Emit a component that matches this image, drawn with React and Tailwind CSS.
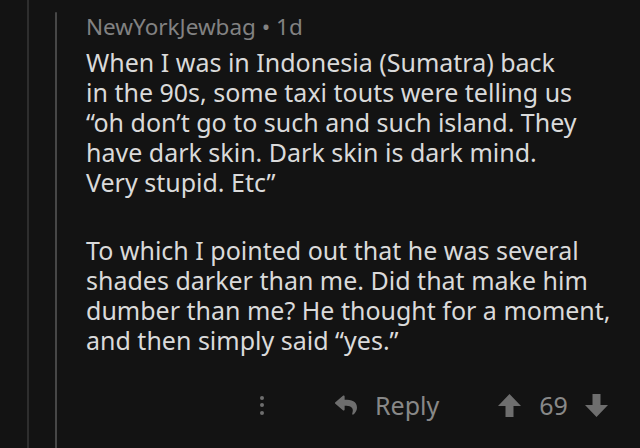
import { FaReply } from "react-icons/fa";

function Arrow({ down }) {
  return (
    <svg width="23" height="23" viewBox="0 0 23 23" className="shrink-0">
      <path
        d={down ? "M11.5 23 L23 11 L15.5 11 L15.5 0 L7.5 0 L7.5 11 L0 11 Z" : "M11.5 0 L23 12 L15.5 12 L15.5 23 L7.5 23 L7.5 12 L0 12 Z"}
        fill="#6e6e6e"
      />
    </svg>
  );
}

export default function App() {
  return (
    <div className="w-[640px] h-[448px] overflow-hidden bg-[#131313] flex" style={{ fontFamily: '"Noto Sans", "Open Sans", sans-serif' }}>
      <div className="w-[27px] shrink-0" />
      <div className="w-[2px] shrink-0 bg-[#2e2e2e]" />
      <div className="w-[26px] shrink-0" />
      <div className="w-[2px] shrink-0 mt-[12px] rounded-t-full bg-[#474747]" />
      <div className="flex-1 pl-[29px] pt-[15px]">
        <div className="text-[22.5px] leading-[24px] text-[#828282] whitespace-nowrap">NewYorkJewbag • 1d</div>
        <div className="mt-[8px] text-[25px] leading-[30px] text-[#dadada] whitespace-nowrap">
          <p>When I was in Indonesia (Sumatra) back<br />in the 90s, some taxi touts were telling us<br />“oh don’t go to such and such island. They<br />have dark skin. Dark skin is dark mind.<br />Very stupid. Etc”</p>
          <p className="mt-[38px]">To which I pointed out that he was several<br />shades darker than me. Did that make him<br />dumber than me? He thought for a moment,<br />and then simply said “yes.”</p>
        </div>
        <div className="mt-[36px] h-[28px] flex items-center text-[25px] leading-[28px] text-[#888888]">
          <div className="ml-[174px] flex flex-col gap-[3.5px] shrink-0">
            <div className="w-[4px] h-[4px] rounded-full bg-[#6e6e6e]" />
            <div className="w-[4px] h-[4px] rounded-full bg-[#6e6e6e]" />
            <div className="w-[4px] h-[4px] rounded-full bg-[#6e6e6e]" />
          </div>
          <FaReply className="ml-[71px] shrink-0 text-[#6e6e6e]" size={22} />
          <span className="ml-[18px]">Reply</span>
          <div className="ml-[59px]"><Arrow /></div>
          <span className="ml-[18px]">69</span>
          <div className="ml-[17px]"><Arrow down /></div>
        </div>
      </div>
    </div>
  );
}
